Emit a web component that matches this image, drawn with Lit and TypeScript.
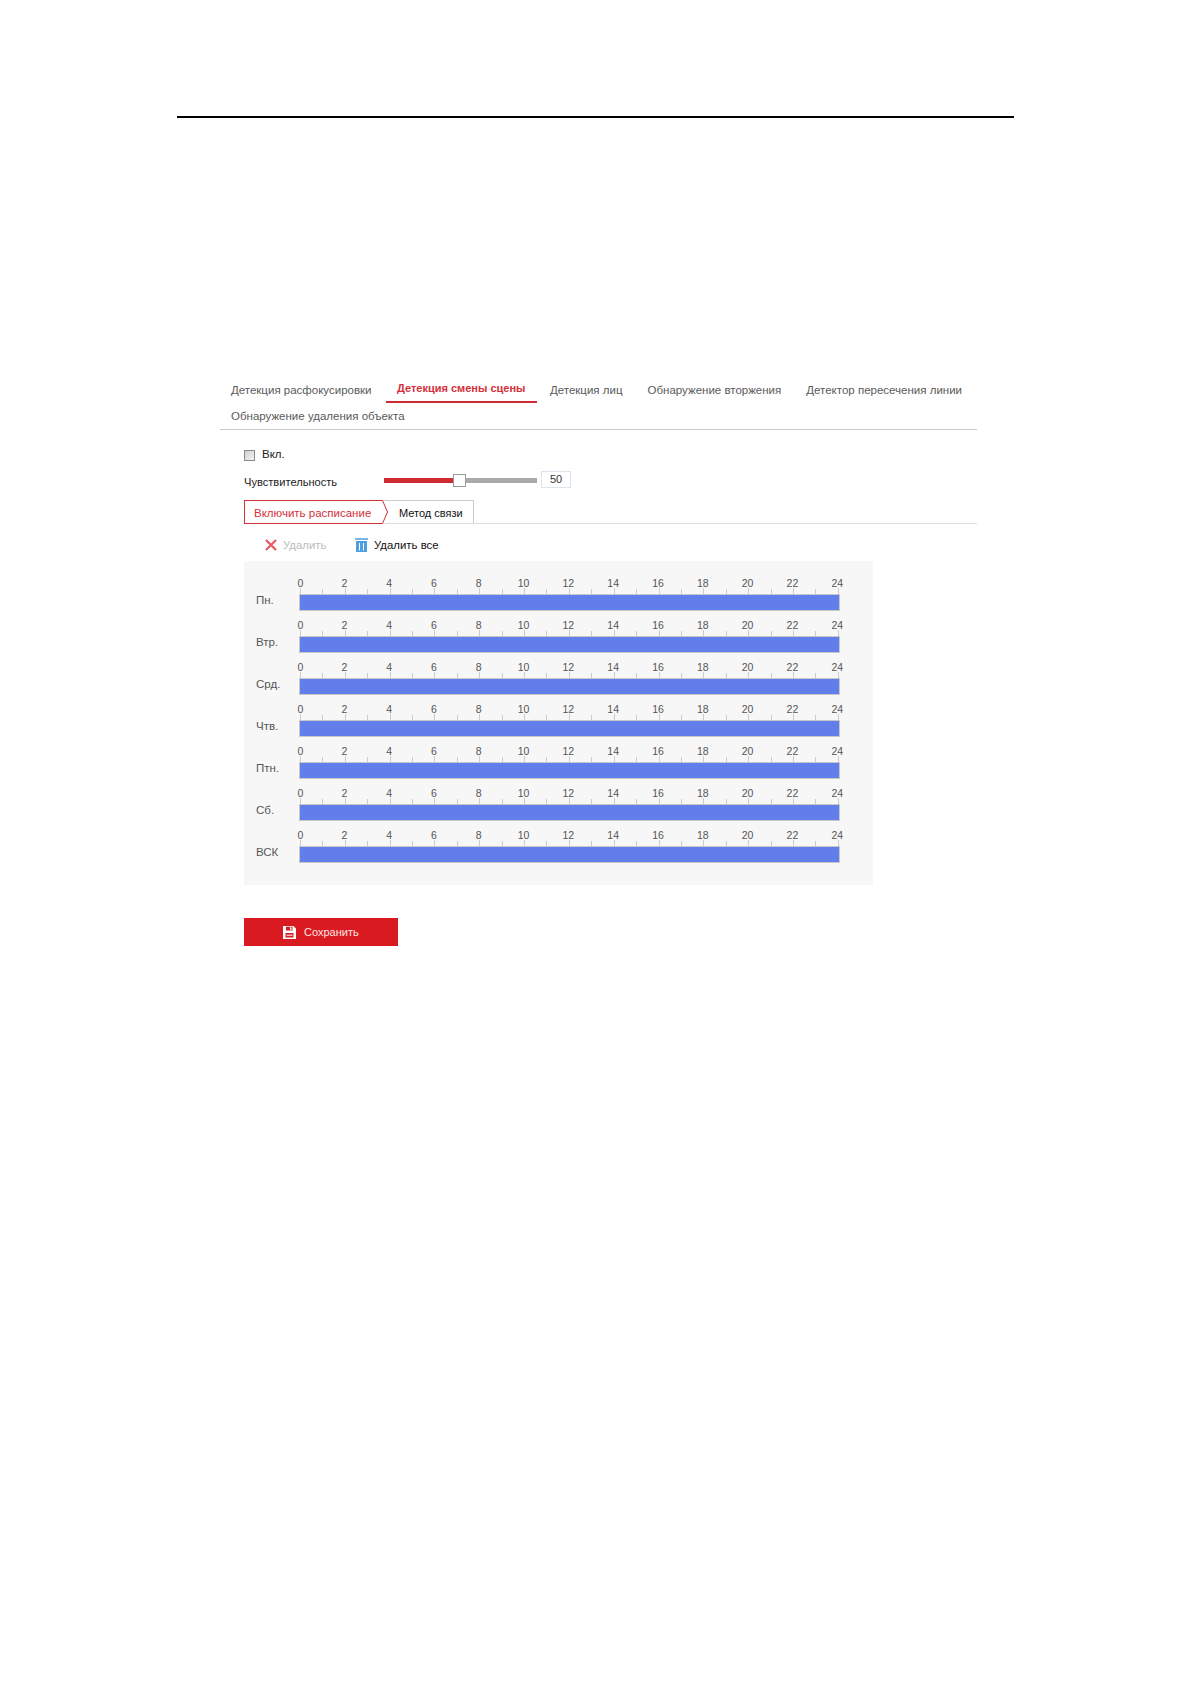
import { LitElement, html, css } from "lit";
import { customElement } from "lit/decorators.js";

const TABS_ROW1 = ["Детекция расфокусировки", "Детекция смены сцены", "Детекция лиц", "Обнаружение вторжения", "Детектор пересечения линии"];
const TABS_ROW2 = ["Обнаружение удаления объекта"];
const DAYS = ["Пн.", "Втр.", "Срд.", "Чтв.", "Птн.", "Сб.", "ВСК"];
const HOURS = Array.from({ length: 25 }, (_, i) => i);

@customElement("app-root")
export class AppRoot extends LitElement {
  static styles = css`
    :host { display: block; min-height: 1684px; background: #fff; font-family: "Liberation Sans", Arial, sans-serif; font-size: 12px; color: #333; }
    .page { padding: 116px 0 0 177px; }
    .rule { width: 837px; height: 2px; background: #000; }
    .main { width: 757px; margin: 260px 0 0 43px; }
    .tabs { display: flex; flex-direction: column; gap: 1px; border-bottom: 1px solid #c9c9c9; height: 52px; box-sizing: border-box; }
    .tabrow { display: flex; }
    .tab { height: 25px; line-height: 25px; padding: 0 11px; margin-right: 3px; color: #5a5a5a; font-size: 11.5px; white-space: nowrap; }
    .tab.on { color: #d5303a; font-weight: bold; font-size: 11px; padding: 0 11.5px; margin-right: 2px; border-bottom: 2px solid #cf2a32; line-height: 21px; height: 23px; }
    .body { padding: 0 0 0 24px; }
    .enable { display: flex; align-items: center; height: 20px; margin-top: 15px; font-size: 11.5px; }
    .box { width: 9px; height: 9px; border: 1px solid #8a8a8a; background: linear-gradient(135deg, #d0d0d0, #f4f4f4); margin-right: 7px; margin-top: 1px; }
    .enable span { color: #222; padding-bottom: 2px; }
    .sens { display: flex; align-items: center; height: 17px; margin-top: 6px; }
    .sens-label { width: 140px; color: #222; padding-top: 5px; font-size: 11.1px; }
    .track { position: relative; width: 153px; height: 5px; background: #aaa; margin-top: 2px; }
    .fill { width: 70px; height: 5px; background: #cf2a32; }
    .thumb { position: absolute; left: 69px; top: -4px; width: 11px; height: 11px; background: #fff; border: 1px solid #999; }
    .num { width: 28px; height: 15px; line-height: 15px; margin-left: 4px; border: 1px solid #dde3ea; text-align: center; font-size: 11px; color: #333; }
    .sub { display: flex; height: 24px; box-sizing: border-box; margin-top: 12px; border-bottom: 1px solid #ddd; }
    .sub-on { position: relative; width: 128px; height: 22px; line-height: 24px; padding-left: 9px; border: 1px solid #d5303a; border-right: none; color: #d5303a; font-size: 11.5px; white-space: nowrap; }
    .sub-tip { position: absolute; left: 137px; top: -1px; width: 7px; height: 24px; }
    .sub-off { width: 92px; padding-left: 17px; box-sizing: border-box; height: 23px; line-height: 24px; border-top: 1px solid #ccc; border-right: 1px solid #ccc; color: #111; font-size: 11px; white-space: nowrap; }
    .tools { display: flex; align-items: center; height: 37px; box-sizing: border-box; padding: 5px 0 0 21px; font-size: 11.4px; }
    .tool { display: flex; align-items: center; }
    .tool.dim { color: #bbb; width: 90px; }
    .tool.dim svg { margin-right: 6px; }
    .tool.all { color: #111; }
    .tool.all svg { margin-right: 6px; }
    .panel { width: 629px; box-sizing: border-box; background: #f7f7f7; padding: 15px 0 22px 12px; display: flex; flex-direction: column; gap: 7px; }
    .row { display: flex; align-items: flex-end; }
    .day { width: 43px; color: #555; font-size: 11.5px; line-height: 14px; margin-bottom: 4px; }
    .sched { width: 541px; }
    .ruler { display: flex; justify-content: space-between; height: 18px; padding: 0 1px; }
    .h { width: 1px; display: flex; flex-direction: column; align-items: center; justify-content: flex-end; }
    .h b { font-weight: normal; font-size: 10.5px; line-height: 12px; color: #555; margin-bottom: -1px; }
    .h:not(:first-child) b { margin-right: 2px; }
    .h i { display: block; width: 1px; height: 6px; background: #ccc; }
    .h.odd i { height: 5px; }
    .bar { height: 15px; border: 1px solid #c8c8c8; background: #627eea; }
    .save { display: flex; align-items: center; width: 154px; height: 28px; margin-top: 33px; padding-left: 39px; box-sizing: border-box; background: #d91a20; color: #fde4e6; font-size: 11px; }
    .save svg { margin-right: 8px; }
  `;

  render() {
    const tab = (t: string) => html`<div class="tab ${t === "Детекция смены сцены" ? "on" : ""}">${t}</div>`;
    return html`<div class="page">
      <div class="rule"></div>
      <div class="main">
        <div class="tabs">
          <div class="tabrow">${TABS_ROW1.map(tab)}</div>
          <div class="tabrow">${TABS_ROW2.map(tab)}</div>
        </div>
        <div class="body">
          <div class="enable"><div class="box"></div><span>Вкл.</span></div>
          <div class="sens">
            <div class="sens-label">Чувствительность</div>
            <div class="track"><div class="fill"></div><div class="thumb"></div></div>
            <div class="num">50</div>
          </div>
          <div class="sub">
            <div class="sub-on">Включить расписание
              <svg class="sub-tip" viewBox="0 0 7 24"><path d="M0 .5 L.5 .5 L5.5 12 L.5 23.5 L0 23.5" fill="#fff" stroke="#d5303a"/></svg>
            </div>
            <div class="sub-off">Метод связи</div>
          </div>
          <div class="tools">
            <div class="tool dim">
              <svg width="12" height="12" viewBox="0 0 12 12"><path d="M1 1 L11 11 M11 1 L1 11" stroke="#ea5a60" stroke-width="2.2" fill="none"/></svg>
              Удалить
            </div>
            <div class="tool all">
              <svg width="13" height="14" viewBox="0 0 13 14"><rect x="0" y="0" width="13" height="2" fill="#79b6e8"/><rect x="1" y="3" width="11" height="11" fill="#4d9fe0"/><path d="M4.5 5 V12.5 M8.5 5 V12.5" stroke="#fff"/></svg>
              Удалить все
            </div>
          </div>
          <div class="panel">
            ${DAYS.map((d) => html`<div class="row">
              <div class="day">${d}</div>
              <div class="sched">
                <div class="ruler">
                  ${HOURS.map((h) => html`<div class="h ${h % 2 ? "odd" : ""}">${h % 2 ? "" : html`<b>${h}</b>`}<i></i></div>`)}
                </div>
                <div class="bar"></div>
              </div>
            </div>`)}
          </div>
          <div class="save">
            <svg width="13" height="13" viewBox="0 0 13 13"><path fill-rule="evenodd" fill="#fff" d="M0 0 H10.5 L13 2.5 V13 H0 Z M3 0.8 V4.5 H9.5 V0.8 Z M2.5 7 V11.5 H10.5 V7 Z"/><rect x="7" y="1.3" width="1.5" height="2.5" fill="#fff"/><path d="M3.5 9.2 H9.5" stroke="#fff"/></svg>
            Сохранить
          </div>
        </div>
      </div>
    </div>`;
  }
}
